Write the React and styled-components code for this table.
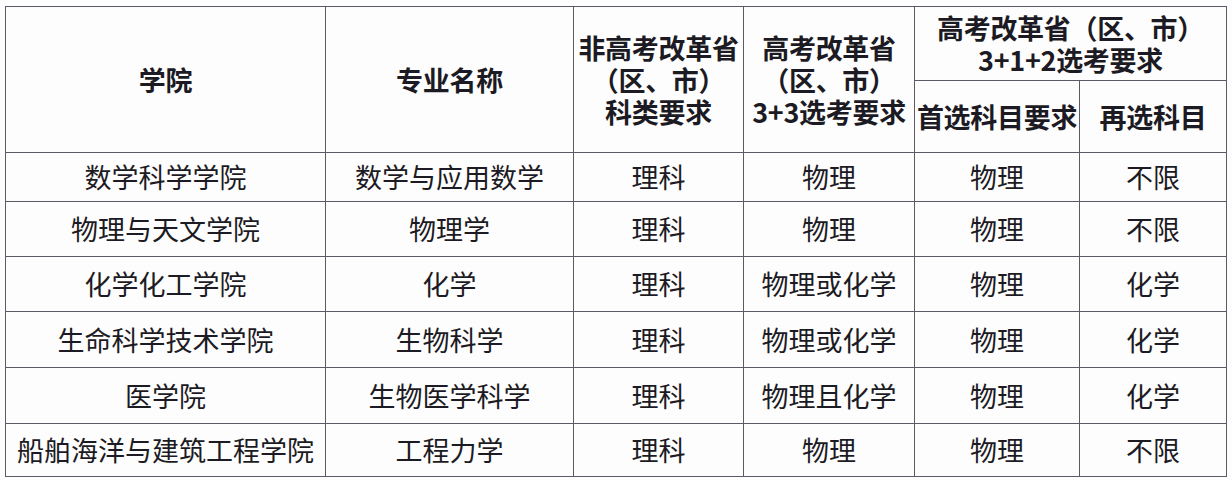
import React from "react";
import styled, { createGlobalStyle } from "styled-components";

const rows = [
  ["数学科学学院", "数学与应用数学", "理科", "物理", "物理", "不限"],
  ["物理与天文学院", "物理学", "理科", "物理", "物理", "不限"],
  ["化学化工学院", "化学", "理科", "物理或化学", "物理", "化学"],
  ["生命科学技术学院", "生物科学", "理科", "物理或化学", "物理", "化学"],
  ["医学院", "生物医学科学", "理科", "物理且化学", "物理", "化学"],
  ["船舶海洋与建筑工程学院", "工程力学", "理科", "物理", "物理", "不限"],
];

const rowHeights = [49, 55, 55, 56, 56, 53];
const colWidths = [320, 248, 170, 171, 165, 147];

function App() {
  return (
    <>
      <GlobalStyle />
      <Page>
        <Table>
          <colgroup>
            {colWidths.map((w, i) => (
              <col key={i} style={{ width: w }} />
            ))}
          </colgroup>
          <thead>
            <HeadRow $h={74}>
              <Th rowSpan={2}>学院</Th>
              <Th rowSpan={2}>专业名称</Th>
              <Th rowSpan={2}>
                <Line>非高考改革省</Line>
                <Line>（区、市）</Line>
                <Line>科类要求</Line>
              </Th>
              <Th rowSpan={2}>
                <Line>高考改革省</Line>
                <Line>（区、市）</Line>
                <Line>3+3选考要求</Line>
              </Th>
              <Th colSpan={2}>
                <Line>高考改革省（区、市）</Line>
                <Line>3+1+2选考要求</Line>
              </Th>
            </HeadRow>
            <HeadRow $h={72}>
              <Th>首选科目要求</Th>
              <Th>再选科目</Th>
            </HeadRow>
          </thead>
          <tbody>
            {rows.map((r, i) => (
              <Row key={i} $h={rowHeights[i]}>
                {r.map((c, j) => (
                  <Td key={j}>{c}</Td>
                ))}
              </Row>
            ))}
          </tbody>
        </Table>
      </Page>
    </>
  );
}

const GlobalStyle = createGlobalStyle`
  body {
    margin: 0;
    background: #ffffff;
    font-family: "Noto Sans CJK SC", "Noto Sans", sans-serif;
    color: #1c1a22;
  }
`;

const Page = styled.div`
  width: 1232px;
  height: 480px;
  padding: 6px 0 0 5px;
  box-sizing: border-box;
  background: #fdfdfe;
`;

const Table = styled.table`
  border-collapse: collapse;
  table-layout: fixed;
  width: 1221px;
  border: 1.5px solid #5d5a66;
`;

const HeadRow = styled.tr`
  height: ${(p) => p.$h}px;
`;

const Row = styled.tr`
  height: ${(p) => p.$h}px;
`;

const Th = styled.th`
  border: 1.5px solid #5d5a66;
  padding: 0;
  font-size: 27px;
  font-weight: 700;
  line-height: 32px;
  text-align: center;
  vertical-align: middle;
  white-space: nowrap;
  letter-spacing: -0.3px;
`;

const Line = styled.div`
  height: 32px;
  line-height: 32px;
`;

const Td = styled.td`
  border: 1.5px solid #5d5a66;
  padding: 0;
  font-size: 27px;
  font-weight: 400;
  line-height: 30px;
  text-align: center;
  vertical-align: middle;
  white-space: nowrap;
`;

export default App;
